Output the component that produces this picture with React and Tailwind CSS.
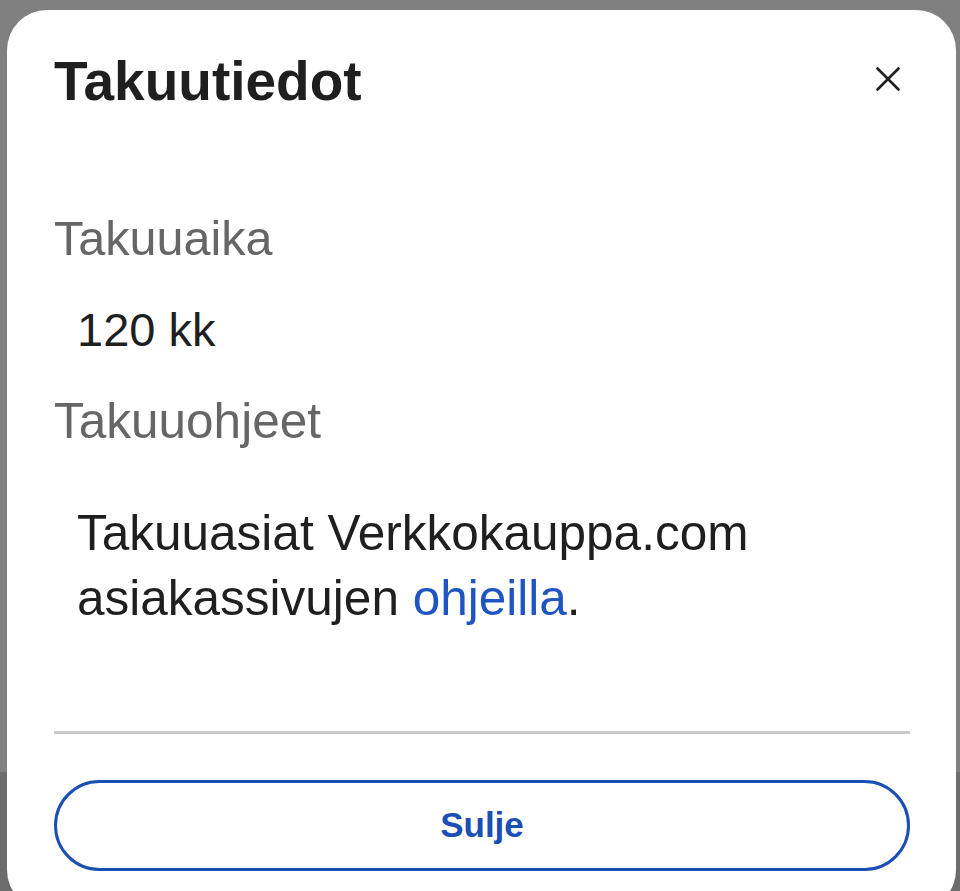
import React from 'react';

const font = { fontFamily: '"Liberation Sans", Arial, sans-serif' };

const CloseIcon = () => (
  <svg width="24" height="24" viewBox="0 0 24 24" fill="none" stroke="#1f1f1f" strokeWidth="2.6" strokeLinecap="round">
    <path d="M1.5 1.5L22.5 22.5M22.5 1.5L1.5 22.5" />
  </svg>
);

export default function App() {
  return (
    <div
      className="h-[891px] overflow-hidden pt-[10px] pl-[7px] pr-[4px] bg-[linear-gradient(to_bottom,#808080_772px,#6c6c6c_772px)]"
      style={font}
    >
      <div className="h-[900px] rounded-[40px] bg-white pt-[44px] pl-[47px] pr-[46px]">
        {/* header */}
        <div className="flex items-start justify-between">
          <h2 className="text-[55px] leading-[55px] font-bold text-[#1f1f1f]">Takuutiedot</h2>
          <button className="mt-[13px] mr-[10px]">
            <CloseIcon />
          </button>
        </div>

        <div className="mt-[105px] text-[48.5px] leading-[49px] text-[#666666]">Takuuaika</div>
        <div className="mt-[43px] pl-[23px] text-[47px] leading-[47px] text-[#1f1f1f]">120 kk</div>

        <div className="mt-[43px] text-[49.5px] leading-[49px] text-[#666666]">Takuuohjeet</div>
        <p className="mt-[55px] pl-[23px] text-[49.5px] leading-[65px] text-[#1f1f1f]">
          Takuuasiat Verkkokauppa.com asiakassivujen{' '}
          <span className="whitespace-nowrap">
            <a href="#" className="text-[#1f55c2]">ohjeilla</a>.
          </span>
        </p>

        <div className="mt-[101px] h-[3px] bg-[#c9c9c9]" />

        <button className="mt-[46px] flex h-[91px] w-full items-center justify-center rounded-full border-[3px] border-[#1a4fb4] text-[35px] font-bold text-[#1a4fb4]">
          Sulje
        </button>
      </div>
    </div>
  );
}
